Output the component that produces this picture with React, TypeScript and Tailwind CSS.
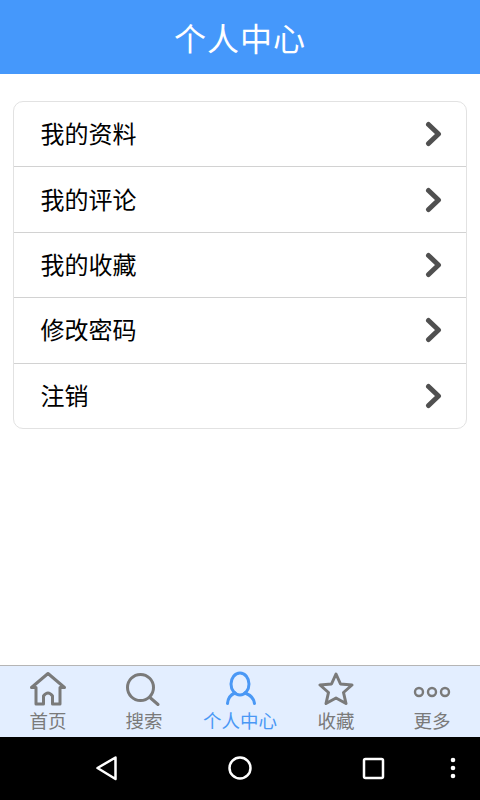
const font = { fontFamily: '"Noto Sans CJK SC", sans-serif' };
const rows = ["我的资料", "我的评论", "我的收藏", "修改密码", "注销"];

function Chevron() {
  return (
    <svg width="18" height="26" viewBox="0 0 18 26" fill="none">
      <path d="M3.5 3.5 L13.5 13 L3.5 22.5" stroke="#505050" strokeWidth="5" strokeLinecap="round" strokeLinejoin="round" />
    </svg>
  );
}

const gray = "#7a7a7a";
const blue = "#4a98f5";

function Tab({ label, active, children }: { label: string; active?: boolean; children: React.ReactNode }) {
  return (
    <div className="flex-1 flex flex-col items-center">
      <div className="h-[41px] flex items-center justify-center">{children}</div>
      <div className={`text-[18.5px] leading-[22px] mt-[2px] ${active ? "text-[#4a98f5]" : "text-[#7a7a7a]"}`}>{label}</div>
    </div>
  );
}

export default function App() {
  return (
    <div className="w-[480px] h-[800px] flex flex-col bg-white overflow-hidden" style={font}>
      <header className="h-[74px] shrink-0 bg-[#4598fb] flex items-center justify-center text-white text-[32px] tracking-[1px]">个人中心</header>
      <main className="flex-1 px-[13px] pt-[27px]">
        <div className="border border-[#e2e2e2] rounded-[10px] bg-white">
          {rows.map((r, i) => (
            <div key={r} className={`flex items-center justify-between pl-[26.5px] pr-[23px] text-[24px] text-black ${i ? "h-[65.4px] border-t border-[#d2d2d2]" : "h-[64.4px]"}`}>
              <span className="relative -top-[1px]">{r}</span>
              <Chevron />
            </div>
          ))}
        </div>
      </main>
      <nav className="h-[72px] shrink-0 bg-[#e3eeff] border-t border-[#b5b5b5] flex px-0">
        <Tab label="首页">
          <svg width="38" height="38" viewBox="0 0 38 38" fill="none" stroke={gray} strokeWidth="3" strokeLinejoin="round" strokeLinecap="round">
            <path d="M2.5 19.5 L19 5.5 L35.5 19.5 L31 19.5 L31 36 L23.5 36 L23.5 28 Q19 22 14.5 28 L14.5 36 L7 36 L7 19.5 Z" />
          </svg>
        </Tab>
        <Tab label="搜索">
          <svg width="36" height="38" viewBox="0 0 36 38" fill="none" stroke={gray} strokeWidth="3" strokeLinecap="round">
            <circle cx="14.5" cy="19.5" r="13" />
            <path d="M24.5 30 L32 36.5" />
          </svg>
        </Tab>
        <Tab label="个人中心" active>
          <svg width="34" height="38" viewBox="0 0 34 38" fill="none" stroke={blue} strokeWidth="3" strokeLinecap="round">
            <ellipse cx="17" cy="16" rx="9" ry="11" />
            <path d="M4.5 35.5 C5 30 8 26.5 12 25 M31.5 35.5 C31 30 26 26.5 22 25" />
          </svg>
        </Tab>
        <Tab label="收藏">
          <svg width="36" height="38" viewBox="0 0 36 38" fill="none" stroke={gray} strokeWidth="3" strokeLinejoin="round">
            <path d="M18 6 L22.5 16 L34 17 L25.5 24.5 L28 35.5 L18 30 L8 35.5 L10.5 24.5 L2 17 L13.5 16 Z" />
          </svg>
        </Tab>
        <Tab label="更多">
          <svg width="38" height="38" viewBox="0 0 38 38" fill="none" stroke={gray} strokeWidth="2.4">
            <circle cx="6" cy="24" r="4" />
            <circle cx="19" cy="24" r="4" />
            <circle cx="32" cy="24" r="4" />
          </svg>
        </Tab>
      </nav>
      <div className="h-[63px] shrink-0 bg-black flex items-center relative">
        <svg className="absolute left-[95px] top-[18px]" width="24" height="26" viewBox="0 0 24 26" fill="none" stroke="white" strokeWidth="2.5" strokeLinejoin="round">
          <path d="M20.5 2.5 L2.5 13 L20.5 24 Z" />
        </svg>
        <svg className="absolute left-[227px] top-[18px]" width="26" height="26" viewBox="0 0 26 26" fill="none" stroke="white" strokeWidth="2.5">
          <circle cx="13" cy="13" r="10.5" />
        </svg>
        <svg className="absolute left-[362px] top-[20px]" width="23" height="23" viewBox="0 0 23 23" fill="none" stroke="white" strokeWidth="2.5">
          <rect x="2" y="2" width="19" height="19" rx="1.5" />
        </svg>
        <svg className="absolute left-[449px] top-[19px]" width="8" height="24" viewBox="0 0 8 24" fill="white">
          <circle cx="4" cy="4" r="2.3" />
          <circle cx="4" cy="12" r="2.3" />
          <circle cx="4" cy="20" r="2.3" />
        </svg>
      </div>
    </div>
  );
}
